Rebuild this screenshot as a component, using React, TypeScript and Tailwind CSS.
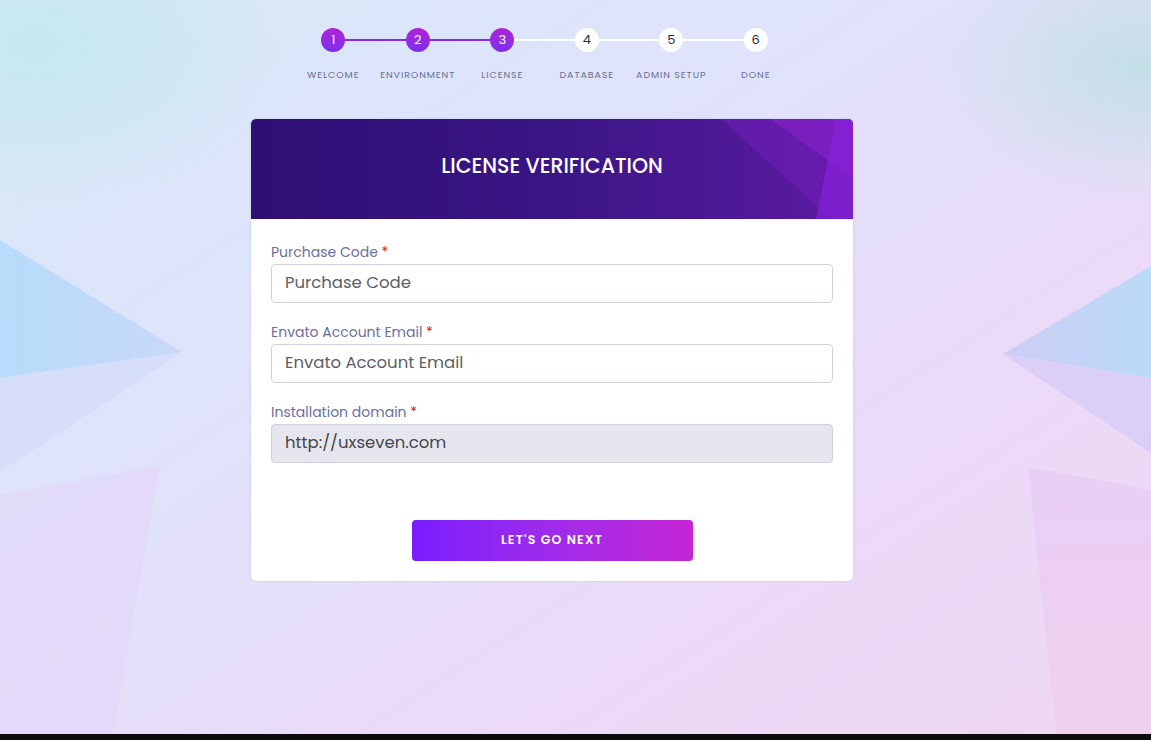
import React from "react";

const steps = ["WELCOME", "ENVIRONMENT", "LICENSE", "DATABASE", "ADMIN SETUP", "DONE"];
const font = { fontFamily: "Poppins, 'Open Sans', 'Liberation Sans', sans-serif" };

function Background() {
  return (
    <svg className="absolute inset-0 w-full h-full" viewBox="0 0 1151 740" preserveAspectRatio="none">
      <defs>
        <linearGradient id="bg" x1="0" y1="0" x2="1" y2="1">
          <stop offset="0" stopColor="#d8e8f7" />
          <stop offset="0.35" stopColor="#dfe3fb" />
          <stop offset="0.7" stopColor="#ebdaf8" />
          <stop offset="1" stopColor="#eed7f3" />
        </linearGradient>
        <radialGradient id="tl" cx="0.03" cy="0.06" r="0.22">
          <stop offset="0" stopColor="#c2e9ee" stopOpacity="0.9" />
          <stop offset="1" stopColor="#c2e9ee" stopOpacity="0" />
        </radialGradient>
        <radialGradient id="tr" cx="0.99" cy="0.09" r="0.18">
          <stop offset="0" stopColor="#c0dfe4" stopOpacity="0.9" />
          <stop offset="1" stopColor="#c0dfe4" stopOpacity="0" />
        </radialGradient>
        <linearGradient id="lb" x1="0" y1="0" x2="1" y2="0">
          <stop offset="0" stopColor="#b3dbfb" />
          <stop offset="1" stopColor="#c7d6f8" />
        </linearGradient>
        <linearGradient id="rb" x1="1" y1="0" x2="0" y2="0">
          <stop offset="0" stopColor="#b4dbf8" />
          <stop offset="1" stopColor="#cbcbf6" />
        </linearGradient>
        <linearGradient id="rp" x1="0" y1="0" x2="0" y2="1">
          <stop offset="0" stopColor="#e8c9f6" />
          <stop offset="1" stopColor="#f0cde8" />
        </linearGradient>
      </defs>
      <rect width="1151" height="740" fill="url(#bg)" />
      <rect width="1151" height="740" fill="url(#tl)" />
      <rect width="1151" height="740" fill="url(#tr)" />
      <polygon points="0,240 182,352 0,378" fill="url(#lb)" opacity="0.9" />
      <polygon points="0,378 182,352 0,472" fill="#d3dcf9" opacity="0.7" />
      <polygon points="0,495 160,465 112,740 0,740" fill="#e2d6f6" opacity="0.6" />
      <polygon points="1151,266 1003,354 1151,378" fill="url(#rb)" opacity="0.9" />
      <polygon points="1003,354 1151,378 1151,453" fill="#d7cbf6" opacity="0.8" />
      <polygon points="1028,467 1151,490 1151,740 1057,740" fill="url(#rp)" opacity="0.7" />
      <rect x="0" y="734" width="1151" height="6" fill="#0b0b10" />
    </svg>
  );
}

export default function App() {
  return (
    <div className="relative w-[1151px] h-[740px] overflow-hidden" style={font}>
      <Background />
      <div className="relative flex flex-col items-center pr-[47px] pt-[28px]">
        <div className="grid grid-cols-6 w-[507px] mr-[15px]">
          {steps.map((s, i) => {
            const done = i < 3;
            return (
              <div key={s} className="relative flex flex-col items-center">
                {i < 5 && (
                  <div
                    className={`absolute top-[11px] left-1/2 w-full h-[2px] ${i < 2 ? "bg-[#8a2be2]" : "bg-white"}`}
                  />
                )}
                <div
                  className={`relative z-10 w-[24px] h-[24px] rounded-full flex items-center justify-center text-[13px] ${
                    done
                      ? "bg-gradient-to-b from-[#b01fd2] to-[#7b2cf0] text-white"
                      : "bg-white text-[#2a2a3a]"
                  }`}
                >
                  {i + 1}
                </div>
                <div className="mt-[18px] text-[9.5px] tracking-[0.9px] text-[#6a6e93] whitespace-nowrap leading-none">
                  {s}
                </div>
              </div>
            );
          })}
        </div>

        <div className="mt-[39px] w-[602px] rounded-[5px] bg-white overflow-hidden shadow-[0_0_2px_rgba(120,100,180,0.25)]">
          <div className="relative h-[100px] flex items-center justify-center bg-gradient-to-r from-[#2d0f74] via-[#3a1584] to-[#5c1ba2] overflow-hidden">
            <svg className="absolute inset-0 w-full h-full" viewBox="0 0 602 100" preserveAspectRatio="none">
              <polygon points="470,0 602,0 602,100 580,100" fill="#7d1fc6" opacity="0.4" />
              <polygon points="520,0 602,0 602,60" fill="#8e24d0" opacity="0.5" />
              <polygon points="585,0 602,0 602,100 565,100" fill="#8a22e0" opacity="0.6" />
            </svg>
            <h1 className="relative text-white text-[20.5px] font-medium -mt-[4px]">LICENSE VERIFICATION</h1>
          </div>
          <div className="px-[20px] pt-[23px] pb-[20px]">
            {[
              { label: "Purchase Code", ph: "Purchase Code", val: "" },
              { label: "Envato Account Email", ph: "Envato Account Email", val: "" },
              { label: "Installation domain", ph: "", val: "http://uxseven.com" },
            ].map((f, i) => (
              <div key={f.label} className={i > 0 ? "mt-[19px]" : ""}>
                <label className="block text-[14px] leading-[20px] text-[#6b6f9e]">
                  {f.label} <span className="text-[#e0141e]">*</span>
                </label>
                <div
                  className={`mt-[2px] h-[39px] rounded-[4px] border border-[#cfd2dc] flex items-center px-[13px] text-[16.5px] ${
                    f.val ? "bg-[#e6e7ee] text-[#44464d]" : "bg-white text-[#5c5e66]"
                  }`}
                >
                  {f.val || f.ph}
                </div>
              </div>
            ))}
            <div className="flex justify-center mt-[57px]">
              <button className="w-[281px] h-[41px] rounded-[4px] bg-gradient-to-r from-[#7a1bff] to-[#c524d4] text-white text-[12.5px] font-semibold tracking-[1.2px]">
                LET'S GO NEXT
              </button>
            </div>
          </div>
        </div>
      </div>
    </div>
  );
}
